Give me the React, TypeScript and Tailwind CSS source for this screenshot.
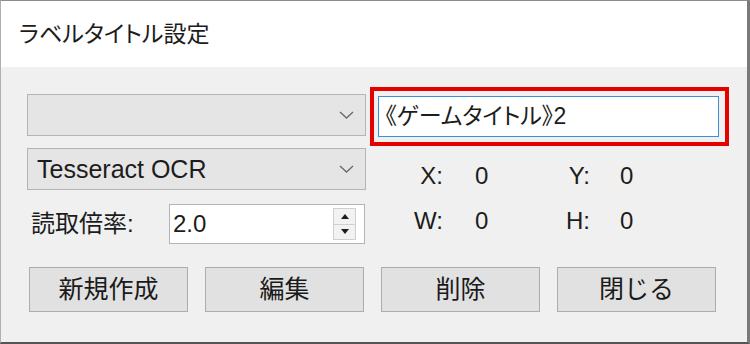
import React from 'react';

const font = "font-['Liberation_Sans','Noto_Sans_CJK_JP',sans-serif]";
const palt = '[font-feature-settings:"palt"]';

function Chevron() {
  return (
    <svg width="15" height="8" viewBox="0 0 15 8" className="ml-auto mr-[11px]">
      <path d="M1 1l6.5 6 6.5-6" fill="none" stroke="#6b6b6b" strokeWidth="1.4" />
    </svg>
  );
}

function Combo({ text }: { text?: string }) {
  return (
    <div className="flex h-[42px] w-[339px] items-center border border-[#b4b4b4] bg-[#e5e5e5] pl-[9px] text-[25px] leading-none text-[#1c1c1c]">
      {text && <span>{text}</span>}
      <Chevron />
    </div>
  );
}

function Spinner() {
  return (
    <div className="flex h-[40px] w-[196px] items-center border border-[#b4b4b4] bg-white pl-[3px] pr-[8px]">
      <span className="text-[24px] leading-none text-[#1c1c1c]">2.0</span>
      <div className="ml-auto flex h-[32px] w-[23px] flex-col border border-[#d0d0d0] bg-[#f2f2f2]">
        <div className="flex flex-1 items-center justify-center border-b border-[#d0d0d0]">
          <svg width="8" height="5" viewBox="0 0 8 5">
            <path d="M0 5L4 0L8 5Z" fill="#1c1c1c" />
          </svg>
        </div>
        <div className="flex flex-1 items-center justify-center">
          <svg width="8" height="5" viewBox="0 0 8 5">
            <path d="M0 0L4 5L8 0Z" fill="#1c1c1c" />
          </svg>
        </div>
      </div>
    </div>
  );
}

function Btn({ label }: { label: string }) {
  return (
    <button className="flex h-[45px] w-[159px] items-center justify-center border border-[#adadad] bg-[#e1e1e1] text-[25px] leading-none text-[#1a1a1a]">
      {label}
    </button>
  );
}

export default function App() {
  return (
    <div
      className={`flex h-[344px] w-[750px] flex-col border-t border-l border-t-[#8c8c8c] border-l-[#b0b0b0] border-r-[3px] border-r-[#7a7a7a] border-b-2 border-b-[#555555] ${font}`}
    >
      <div className="flex h-[66px] items-center bg-white pl-[18px]">
        <h1 className={`text-[23px] font-normal leading-none text-[#1b1b1b] ${palt}`}>
          ラベルタイトル設定
        </h1>
      </div>

      <div className="flex flex-1 flex-col bg-[#f0f0f0] pl-[26px]">
        <div className="flex items-start gap-[4px]">
          <div className="flex flex-col">
            <div className="mt-[27px]">
              <Combo />
            </div>
            <div className="mt-[12px]">
              <Combo text="Tesseract OCR" />
            </div>
            <div className="mt-[14px] flex items-center">
              <span className="w-[142px] pl-[4px] text-[24px] leading-none text-[#1c1c1c]">読取倍率:</span>
              <Spinner />
            </div>
          </div>

          <div className="flex flex-col">
            <div className="mt-[20px] h-[59px] w-[359px] border-4 border-[#e50000] pt-[5px] pl-[4px]">
              <div className="flex h-[41px] w-[341px] items-center border border-[#3d8fd6] bg-white pl-[6px]">
                <span className={`text-[23px] leading-none text-[#1c1c1c] ${palt}`}>《ゲームタイトル》2</span>
              </div>
            </div>
            <div className="mt-[16px] grid grid-cols-[73px_50px_97px_auto] gap-y-[17px] text-[24px] leading-[28px] text-[#1c1c1c]">
              <span className="text-right">X:</span>
              <span className="pl-[32px]">0</span>
              <span className="text-right">Y:</span>
              <span className="pl-[30px]">0</span>
              <span className="text-right">W:</span>
              <span className="pl-[32px]">0</span>
              <span className="text-right">H:</span>
              <span className="pl-[30px]">0</span>
            </div>
          </div>
        </div>

        <div className="mt-[23px] ml-[2px] flex gap-[17px]">
          <Btn label="新規作成" />
          <Btn label="編集" />
          <Btn label="削除" />
          <Btn label="閉じる" />
        </div>
      </div>
    </div>
  );
}
